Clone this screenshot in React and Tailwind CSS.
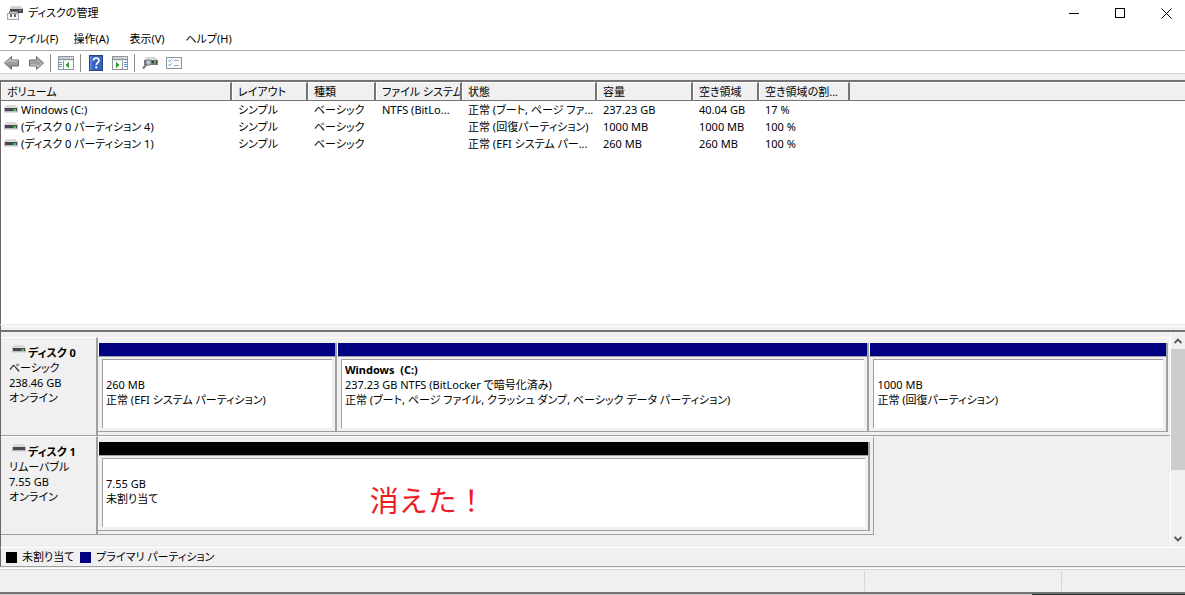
import React from "react";

const volumes = [
  ["Windows (C:)", "シンプル", "ベーシック", "NTFS (BitLo...", "正常 (ブート, ページ ファ...", "237.23 GB", "40.04 GB", "17 %"],
  ["(ディスク 0 パーティション 4)", "シンプル", "ベーシック", "", "正常 (回復パーティション)", "1000 MB", "1000 MB", "100 %"],
  ["(ディスク 0 パーティション 1)", "シンプル", "ベーシック", "", "正常 (EFI システム パー...", "260 MB", "260 MB", "100 %"],
];

const headers = ["ボリューム", "レイアウト", "種類", "ファイル システム", "状態", "容量", "空き領域", "空き領域の割..."];

function DriveIcon({ light = true }) {
  return (
    <svg width="14" height="9" viewBox="0 0 14 9" shapeRendering="crispEdges" className="shrink-0" aria-hidden="true">
      <path d="M2 0h10v1h1v1h1v1H0V2h1V1h1z" fill="#d9d9d9" />
      <rect y="3" width="14" height="4" fill="#bcbcc0" />
      <rect x="1" y="3" width="12" height="3" fill="#4b4750" />
      <rect y="7" width="14" height="1" fill="#dedee0" />
      {light && <rect x="9" y="4" width="3" height="2" fill="#1f9a3c" />}
      {light && <rect x="10" y="4" width="2" height="2" fill="#2ed84c" />}
    </svg>
  );
}

function AppIcon() {
  return (
    <svg width="16" height="16" viewBox="0 0 16 16" shapeRendering="crispEdges" aria-hidden="true">
      <path d="M4 1h10l2 3H3z" fill="#d2d2d2" />
      <rect x="3" y="4" width="13" height="4" fill="#46424a" />
      <rect x="12" y="5" width="2" height="1" fill="#9fa09f" />
      <rect x="2" y="6" width="9" height="3" fill="#77757a" />
      <rect x="3" y="7" width="7" height="2" fill="#bdbdbd" />
      <rect x="0" y="8" width="12" height="7" fill="#a3a3a3" />
      <rect x="1" y="9" width="10" height="5" fill="#f3f3f3" />
      <rect x="3" y="9" width="2" height="3" fill="#6c6c6c" />
      <rect x="7" y="9" width="2" height="3" fill="#6c6c6c" />
    </svg>
  );
}

function ArrowIcon({ right = false }) {
  return (
    <svg width="18" height="16" viewBox="0 0 18 16" aria-hidden="true" className={right ? "rotate-180" : ""}>
      <defs>
        <linearGradient id={right ? "arrowR" : "arrowL"} x1="0" y1={right ? "1" : "0"} x2="0" y2={right ? "0" : "1"}>
          <stop offset="0" stopColor="#b9b9b9" />
          <stop offset="1" stopColor="#858585" />
        </linearGradient>
      </defs>
      <path d="M1.5 8 8.5 1.5V5h7v6h-7v3.5z" fill={right ? "url(#arrowR)" : "url(#arrowL)"} stroke="#6c6c6c" />
      <path d="M3 8l4.500-4.200V6h7" fill="none" stroke="#d0d0d0" strokeWidth="1" />
    </svg>
  );
}

function PaneIcon({ flip = false }) {
  return (
    <svg width="16" height="14" viewBox="0 0 16 14" shapeRendering="crispEdges" aria-hidden="true">
      <rect width="16" height="14" fill="#8f9599" />
      <rect x="1" y="1" width="14" height="2" fill="#c9cdd0" />
      <rect x="12" y="1" width="1" height="1" fill="#fff" />
      <rect x="14" y="1" width="1" height="1" fill="#fff" />
      <rect x="1" y="4" width="14" height="9" fill="#fff" />
      <rect x="1" y="4" width="14" height="1" fill="#dfe3e6" />
      <rect x={flip ? 10 : 5} y="5" width="1" height="8" fill="#8f9599" />
      {[6, 8, 10].map((y) => (
        <rect key={y} x={flip ? 12 : 1} y={y} width="3" height="1" fill="#5b8fc4" />
      ))}
      <path d={flip ? "M4 6h1v1h1v1h1v2H6v1H5v1H4z" : "M11 6h-1v1H9v1H8v2h1v1h1v1h1z"} fill="#35a832" />
    </svg>
  );
}

function HelpIcon() {
  return (
    <svg width="14" height="16" viewBox="0 0 14 16" aria-hidden="true">
      <rect x="0.500" y="0.500" width="13" height="15" fill="#3764c2" stroke="#274585" />
      <path d="M1 1h2v14H1z" fill="#5c83d1" />
      <path d="M4.500 5.500C4.500 3.500 5.800 3 7.200 3c1.600 0 2.700.9 2.700 2.400C9.900 7.500 7.300 7.600 7.300 10" fill="none" stroke="#fff" strokeWidth="1.700" />
      <rect x="6.300" y="11.300" width="2" height="2" fill="#fff" />
    </svg>
  );
}

function RescanIcon() {
  return (
    <svg width="16" height="14" viewBox="0 0 16 14" aria-hidden="true">
      <path d="M4 1h9l3 3H2z" fill="#d8d8d8" />
      <path d="M2 4h14v5H2z" fill="#77777b" />
      <path d="M9 5h6v2H9z" fill="#37343a" />
      <path d="M12 5h2v2h-2z" fill="#2ddc4d" />
      <circle cx="6.500" cy="6.500" r="2.800" fill="#b9c7d2" stroke="#707478" />
      <path d="M4.500 8.500 1 12.500" stroke="#77777b" strokeWidth="2" />
    </svg>
  );
}

function ListIcon() {
  return (
    <svg width="16" height="12" viewBox="0 0 16 12" aria-hidden="true">
      <rect x="0.500" y="0.500" width="15" height="11" fill="#f8fafb" stroke="#8b959c" />
      <path d="m2.500 3.500 1 1 2-2M2.500 7.500l1 1 2-2" fill="none" stroke="#3a8fdc" />
      <path d="M8 3.500h5M8 8.500h5" stroke="#a4acb2" />
    </svg>
  );
}

function ToolButton({ label, children }) {
  return (
    <button type="button" aria-label={label} className="flex h-5 w-6 items-center justify-center">
      {children}
    </button>
  );
}

function ToolGroup({ children }) {
  return <div className="flex h-[18px] items-center border-l border-[#8c8c8c] pr-[2px] pl-[3px]">{children}</div>;
}

function Partition({ grow, bar, name, size, status, note }) {
  return (
    <section className={`${grow} flex min-w-0 basis-0 flex-col border-r-2 border-b border-[#a0a0a0]`}>
      <div className={`h-[13px] border-l border-white ${bar}`} />
      <div className="flex flex-1 border-t border-l border-t-[#a0a0a0] border-l-[#f0f0f0] px-[3px] pt-[2px] pb-[3px]">
        <div className="relative flex-1 border-t border-l border-[#a0a0a0] bg-white px-[3px] py-[2px] leading-[15px] whitespace-nowrap">
          <h3 className="h-[15px] font-bold whitespace-pre">{name}</h3>
          <p>{size}</p>
          <p>{status}</p>
          {note && (
            <strong className="absolute top-[22px] left-[35%] text-[29px] leading-[40px] font-normal text-[#ed1c24] [font-feature-settings:normal]">{note}</strong>
          )}
        </div>
      </div>
    </section>
  );
}

function DiskRow({ name, kind, size, light, width, children }) {
  return (
    <article className="flex h-[99px]">
      <div className="w-[97px] shrink-0 border-t border-r-2 border-b border-t-white border-r-[#a0a0a0] border-b-[#a0a0a0] pt-[7px] pl-2 leading-[15px] whitespace-nowrap">
        <h2 className="flex gap-[2px] pl-[3px] font-bold">
          <DriveIcon light={light} />
          {name}
        </h2>
        <p>{kind}</p>
        <p>{size}</p>
        <p>オンライン</p>
      </div>
      <div className={`${width} flex border-t border-b border-t-white border-b-[#a0a0a0] pt-[5px] pb-[3px]`}>{children}</div>
    </article>
  );
}

function CaptionButton({ label, children }) {
  return (
    <button type="button" aria-label={label} className="flex h-6 w-[46px] items-center justify-end pr-[13px]">
      {children}
    </button>
  );
}

function WindowBar() {
  return (
    <header className="bg-white">
      <div className="flex h-[26px] items-center pl-[7px]">
        <AppIcon />
        <h1 className="ml-[5px] flex-1">ディスクの管理</h1>
        <CaptionButton label="最小化">
          <svg width="11" height="11" shapeRendering="crispEdges"><path d="M0 5h10v1H0z" /></svg>
        </CaptionButton>
        <CaptionButton label="最大化">
          <svg width="11" height="11" shapeRendering="crispEdges"><path d="M.5.5h9v9h-9z" fill="none" stroke="#000" /></svg>
        </CaptionButton>
        <CaptionButton label="閉じる">
          <svg width="11" height="11"><path d="m.5.5 10 10m0-10-10 10" stroke="#000" /></svg>
        </CaptionButton>
      </div>
      <nav className="flex h-6 items-center gap-[15px] pt-[2px] pl-2">
        {["ファイル(F)", "操作(A)", "表示(V)", "ヘルプ(H)"].map((item) => (
          <button key={item} type="button" className="min-w-[41px] text-left">
            {item}
          </button>
        ))}
      </nav>
      <div role="toolbar" aria-label="ツール" className="flex h-6 items-center border-t border-b border-t-[#adadad] border-b-[#d7d7d7] pt-[2px]">
        <div className="flex pr-[2px]">
          <ToolButton label="戻る"><ArrowIcon /></ToolButton>
          <ToolButton label="進む"><ArrowIcon right /></ToolButton>
        </div>
        <ToolGroup>
          <ToolButton label="コンソール ツリー"><PaneIcon /></ToolButton>
        </ToolGroup>
        <ToolGroup>
          <ToolButton label="ヘルプ"><HelpIcon /></ToolButton>
          <ToolButton label="操作ウィンドウ"><PaneIcon flip /></ToolButton>
        </ToolGroup>
        <ToolGroup>
          <ToolButton label="再スキャン"><RescanIcon /></ToolButton>
          <ToolButton label="一覧"><ListIcon /></ToolButton>
        </ToolGroup>
      </div>
    </header>
  );
}

export default function App() {
  return (
    <main className="flex min-h-screen flex-col bg-[#f0f0f0] font-['Noto_Sans','Noto_Sans_CJK_JP',sans-serif] text-[11px] text-black [font-feature-settings:'palt']">
      <WindowBar />

      <div className="mt-[6px] flex flex-1 flex-col border-t-2 border-l border-t-[#747474] border-l-[#696969] bg-white">
        <table className="w-full table-fixed border-separate border-spacing-0 text-left whitespace-nowrap">
          <colgroup>
            <col className="w-[231px]" />
            <col className="w-[76px]" />
            <col className="w-[68px]" />
            <col className="w-[86px]" />
            <col className="w-[135px]" />
            <col className="w-[96px]" />
            <col className="w-[66px]" />
            <col className="w-[91px]" />
            <col />
          </colgroup>
          <thead>
            <tr className="h-[19px] bg-[#f0f0f0]">
              {headers.map((h) => (
                <th key={h} className="overflow-hidden border-t border-r-2 border-b border-t-white border-r-[#747474] border-b-[#747474] p-0 pl-[6px] leading-[17px] font-normal shadow-[inset_1px_0_0_#fff]">
                  {h}
                </th>
              ))}
              <th className="border-t border-b border-t-white border-b-[#747474] p-0" />
            </tr>
          </thead>
          <tbody>
            {volumes.map((row) => (
              <tr key={row[0]} className="h-[17px]">
                {row.map((cell, i) => (
                  <td key={i} className={`p-0 leading-[17px] ${i === 0 ? "pl-[3px]" : "pl-[6px]"}`}>
                    {i === 0 ? (
                      <span className="flex items-center gap-[3px]">
                        <DriveIcon />
                        {cell}
                      </span>
                    ) : (
                      cell
                    )}
                  </td>
                ))}
                <td className="p-0" />
              </tr>
            ))}
          </tbody>
        </table>
      </div>

      <div className="h-2 border-t-2 border-b-2 border-l border-t-[#f0f0f0] border-b-[#747474] border-l-[#696969]">
        <div className="h-px bg-white" />
      </div>

      <div className="flex border-l border-[#696969]">
        <div className="min-w-0 flex-1 pt-[5px] pb-3">
          <DiskRow name="ディスク 0" kind="ベーシック" size="238.46 GB" light width="flex-1 pr-[2px]">
            <Partition grow="grow-[238]" bar="bg-[#000080]" size="260 MB" status="正常 (EFI システム パーティション)" />
            <Partition grow="grow-[533]" bar="bg-[#000080]" name="Windows  (C:)" size="237.23 GB NTFS (BitLocker で暗号化済み)" status="正常 (ブート, ページ ファイル, クラッシュ ダンプ, ベーシック データ パーティション)" />
            <Partition grow="grow-[298]" bar="bg-[#000080]" size="1000 MB" status="正常 (回復パーティション)" />
          </DiskRow>
          <DiskRow name="ディスク 1" kind="リムーバブル" size="7.55 GB" light={false} width="w-[66.4%] border-r border-r-[#a0a0a0] pr-[3px]">
            <Partition grow="grow" bar="bg-black" size="7.55 GB" status="未割り当て" note="消えた！" />
          </DiskRow>
        </div>
        <div className="flex w-[15px] flex-col border-l border-white" aria-hidden="true">
          <div className="flex h-[17px] items-center justify-center">
            <svg width="8" height="6"><path d="m.5 5 3.500-3.500L7.500 5" fill="none" stroke="#555" strokeWidth="1.800" /></svg>
          </div>
          <div className="h-[121px] bg-[#cdcdcd]" />
          <div className="flex-1" />
          <div className="flex h-[17px] items-center justify-center">
            <svg width="8" height="6"><path d="m.5 1 3.500 3.500L7.500 1" fill="none" stroke="#555" strokeWidth="1.800" /></svg>
          </div>
        </div>
      </div>

      <div className="flex h-5 items-center border-t border-b border-l border-t-white border-b-[#a0a0a0] border-l-[#696969] pl-[5px]">
        <span className="size-[11px] bg-black" />
        <span className="mr-[6px] ml-[5px]">未割り当て</span>
        <span className="size-[11px] bg-[#000080]" />
        <span className="ml-[5px]">プライマリ パーティション</span>
      </div>

      <footer className="mt-px flex h-[26px] border-t border-white">
        <div className="flex flex-1 border-t border-b-2 border-t-[#d7d7d7] border-b-[#747474] py-px">
          <div className="flex-1 border-r border-[#d7d7d7]" />
          <div className="w-[197px] border-r border-[#d7d7d7]" />
          <div className="w-[123px]" />
        </div>
      </footer>
      <div className="flex h-px">
        <div className="flex-1 bg-[#c8c4c4]" />
        <div className="w-[153px] bg-[#1c2a28]" />
      </div>
    </main>
  );
}
